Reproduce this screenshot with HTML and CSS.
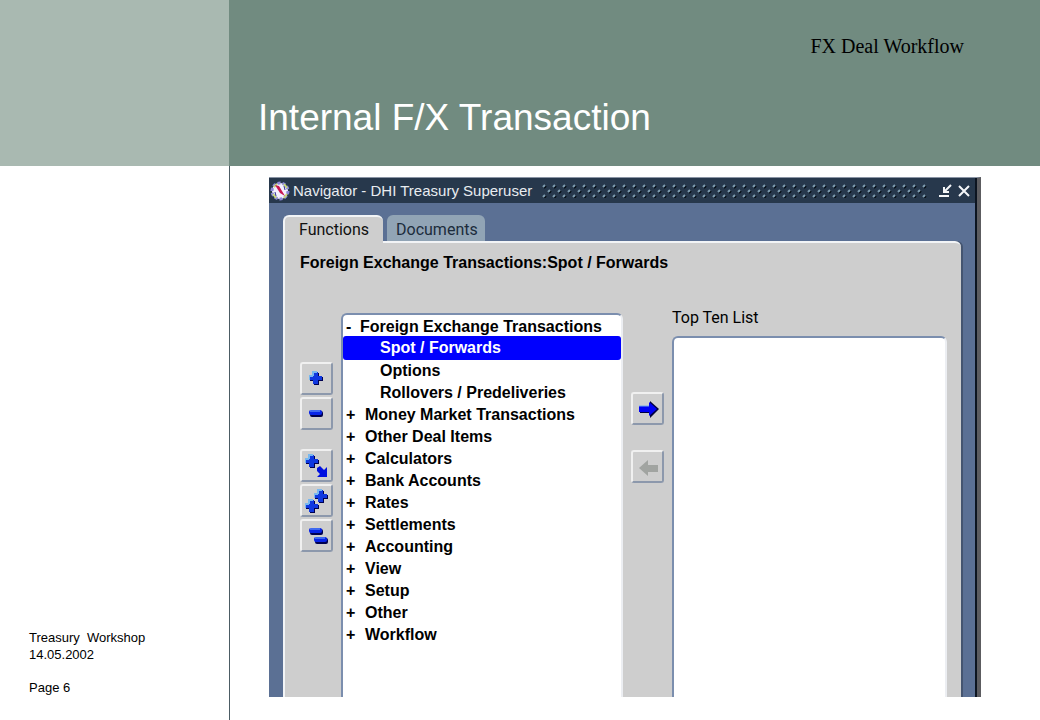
FILE: index.html
```html
<!DOCTYPE html>
<html lang="en">
<head>
    <meta charset="UTF-8">
    <meta name="viewport" content="width=device-width, initial-scale=1.0">
    <title>Internal F/X Transaction</title>
    <link rel="stylesheet" href="styles.css">
</head>
<body>
    <!-- shared icon shapes -->
    <svg class="defs" width="0" height="0" aria-hidden="true">
        <defs>
            <symbol id="plus" viewBox="0 0 14 14">
                <path d="M5 2h5v4h4v4h-4v4H5v-4H1V6h4z" fill="#000050"/>
                <path d="M4 1h5v4h4v4H9v4H4V9H0V5h4z" fill="#1038e0"/>
                <path d="M4 5V1h4M0 9V5h4" fill="none" stroke="#78b8f0" stroke-width="2"/>
            </symbol>
            <symbol id="minus" viewBox="0 0 14 7">
                <rect x="1" y="1" width="13" height="6" rx="2" fill="#000050"/>
                <rect x="0" y="0" width="13" height="5" rx="2" fill="#0824e8"/>
                <path d="M1 1h10" stroke="#78b0f8" stroke-width="1"/>
            </symbol>
            <pattern id="dots" width="10" height="10" patternUnits="userSpaceOnUse">
                <path d="M2 4l2-2M7 9l2-2" stroke="#020a12" stroke-width="2"/>
                <path d="M1 3l2-2M6 8l2-2" stroke="#7f9db0" stroke-width="2"/>
            </pattern>
        </defs>
    </svg>

    <div class="slide">
        <div class="corner"></div>
        <header class="banner">
            <p class="topic">FX Deal Workflow</p>
            <h1>Internal F/X Transaction</h1>
        </header>
        <aside class="sidebar">
            <p>Treasury&nbsp; Workshop<br>14.05.2002</p>
            <p>Page 6</p>
        </aside>
        <main class="content">
            <section class="window">
                <div class="titlebar">
                    <svg class="logo" width="20" height="20" viewBox="0 0 20 20">
                        <circle cx="10" cy="10" r="8" fill="#f4f0ff" stroke="#8c88d8" stroke-width="3" stroke-dasharray="3 2"/>
                        <path d="M4 6l3-3M14 3l3 4M3 13l3 4M14 17l3-4" stroke="#c8d878" stroke-width="2"/>
                        <path d="M5 4l4 1 6 10-5-3z" fill="#c81850"/>
                        <path d="M14 5l1 4M5 11l1 4" stroke="#303090" stroke-width="1"/>
                    </svg>
                    <h2>Navigator - DHI Treasury Superuser</h2>
                    <svg class="grip" height="14"><rect width="100%" height="14" fill="url(#dots)"/></svg>
                    <button class="win-btn" type="button" aria-label="Minimize">
                        <svg width="14" height="14" viewBox="0 0 14 14"><path d="M1 12h10M13 1L6 8M6 3v5h5" fill="none" stroke="#f4f6f8" stroke-width="2"/></svg>
                    </button>
                    <button class="win-btn" type="button" aria-label="Close">
                        <svg width="14" height="14" viewBox="0 0 14 14"><path d="M2 2l10 10M12 2L2 12" stroke="#f4f6f8" stroke-width="2"/></svg>
                    </button>
                </div>
                <div class="window-body">
                    <div class="tabs">
                        <button class="tab active" type="button">Functions</button>
                        <button class="tab" type="button">Documents</button>
                    </div>
                    <div class="panel">
                        <h3>Foreign Exchange Transactions:Spot / Forwards</h3>
                        <div class="columns">
                            <div class="tools">
                                <div class="tool-group">
                                    <button class="tool" type="button" aria-label="Expand">
                                        <svg width="27" height="27"><use href="#plus" x="6" y="6" width="14" height="14"/></svg>
                                    </button>
                                    <button class="tool" type="button" aria-label="Collapse">
                                        <svg width="27" height="27"><use href="#minus" x="6" y="10" width="14" height="7"/></svg>
                                    </button>
                                </div>
                                <div class="tool-group">
                                    <button class="tool" type="button" aria-label="Expand branch">
                                        <svg width="27" height="27">
                                            <use href="#plus" x="2" y="2" width="14" height="14"/>
                                            <path d="M14 16l3-2 4 4 3-3v10H14l3-3-3-3z" fill="#0010e0"/>
                                        </svg>
                                    </button>
                                    <button class="tool" type="button" aria-label="Expand all">
                                        <svg width="27" height="27">
                                            <use href="#plus" x="11" y="2" width="14" height="14"/>
                                            <use href="#plus" x="2" y="12" width="14" height="14"/>
                                        </svg>
                                    </button>
                                    <button class="tool" type="button" aria-label="Collapse all">
                                        <svg width="27" height="27">
                                            <use href="#minus" x="6" y="6" width="14" height="7"/>
                                            <use href="#minus" x="11" y="15" width="14" height="7"/>
                                        </svg>
                                    </button>
                                </div>
                            </div>
                            <ul class="tree">
                                <li class="root"><span class="sign">-</span>Foreign Exchange Transactions</li>
                                <li class="child selected">Spot / Forwards</li>
                                <li class="child">Options</li>
                                <li class="child">Rollovers / Predeliveries</li>
                                <li><span class="sign">+</span>Money Market Transactions</li>
                                <li><span class="sign">+</span>Other Deal Items</li>
                                <li><span class="sign">+</span>Calculators</li>
                                <li><span class="sign">+</span>Bank Accounts</li>
                                <li><span class="sign">+</span>Rates</li>
                                <li><span class="sign">+</span>Settlements</li>
                                <li><span class="sign">+</span>Accounting</li>
                                <li><span class="sign">+</span>View</li>
                                <li><span class="sign">+</span>Setup</li>
                                <li><span class="sign">+</span>Other</li>
                                <li><span class="sign">+</span>Workflow</li>
                            </ul>
                            <div class="movers">
                                <button class="tool" type="button" aria-label="Add to list">
                                    <svg width="27" height="27">
                                        <path d="M6 11h10V6l9 8-9 9v-5H6z" fill="#000040"/>
                                        <path d="M5 11h10V7l8 7-8 7v-4H5z" fill="#0000f4"/>
                                        <path d="M5 11h10" stroke="#70a8f0" stroke-width="1"/>
                                    </svg>
                                </button>
                                <button class="tool" type="button" aria-label="Remove from list" disabled>
                                    <svg width="27" height="27"><path d="M5 15l9-8v5h10v7H14v4z" fill="#a1a4a1"/></svg>
                                </button>
                            </div>
                            <div class="top-ten">
                                <label for="topten">Top Ten List</label>
                                <select id="topten" size="10"></select>
                            </div>
                        </div>
                    </div>
                </div>
            </section>
        </main>
    </div>
</body>
</html>
```
FILE: styles.css
```css
* {
    box-sizing: border-box;
}
body {
    margin: 0;
    background: #fff;
    color: #000;
    font-family: "Liberation Sans", Arial, sans-serif;
}
h1, h2, h3, p, ul {
    margin: 0;
    padding: 0;
}
button {
    font: inherit;
    padding: 0;
    border: none;
}
svg {
    display: block;
    flex: none;
}
.defs {
    position: absolute;
}
.slide {
    display: grid;
    grid-template-columns: 229px 1fr;
    grid-template-rows: 166px 1fr;
    min-height: 100vh;
}
.corner {
    background: #a9b9b1;
}
.banner {
    display: flex;
    flex-direction: column;
    justify-content: space-between;
    background: #718b80;
    padding: 32px 76px 26px 29px;
}
.topic {
    align-self: flex-end;
    font-family: "Liberation Serif", "Times New Roman", serif;
    font-size: 20px;
    line-height: 28px;
}
.banner h1 {
    color: #fff;
    font-size: 37px;
    font-weight: normal;
    line-height: 44px;
}
.sidebar {
    display: flex;
    flex-direction: column;
    justify-content: flex-end;
    gap: 16px;
    padding: 0 0 24px 29px;
    font-size: 13px;
    line-height: 17px;
}
.content {
    display: flex;
    border-left: 1px solid #4c5c64;
    padding: 11px 59px 23px 39px;
}
.window {
    flex: 1;
    display: flex;
    flex-direction: column;
    background: #5b7094;
    border-top: 1px solid #8a94a4;
    border-right: 4px solid #5c5c60;
    box-shadow: inset -2px 0 #0c1420;
}
.titlebar {
    display: flex;
    align-items: center;
    height: 25px;
    margin-right: 2px;
    padding: 0 2px 0 1px;
    background: #27384c;
}
.titlebar h2 {
    margin: 0 10px 0 3px;
    color: #e8ecf0;
    font-size: 15px;
    font-weight: normal;
}
.grip {
    flex: 1;
    width: 0;
    margin-right: 8px;
}
.win-btn {
    background: none;
    margin-left: 1px;
    padding: 0 2px;
}
.window-body {
    flex: 1;
    display: flex;
    flex-direction: column;
    padding: 12px 16px 0 14px;
}
.tabs {
    display: flex;
    gap: 4px;
}
.tab {
    height: 26px;
    padding: 0 7px 0 9px;
    border-radius: 6px 6px 0 0;
    background: #91a4b5;
    color: #1c2c3c;
    font-family: Roboto, sans-serif;
    font-size: 16px;
    line-height: 30px;
}
.tab.active {
    position: relative;
    height: 28px;
    margin-bottom: -2px;
    padding: 0 14px;
    border: 2px solid #f2f4f6;
    border-width: 2px 0 0 2px;
    background: #cecece;
    color: #111;
    line-height: 26px;
}
.panel {
    flex: 1;
    display: flex;
    flex-direction: column;
    padding: 10px 14px 0 15px;
    border: 2px solid #f2f4f6;
    border-width: 2px 0 0 2px;
    border-radius: 0 6px 0 0;
    background: #cecece;
    box-shadow: 2px 0 #455570;
}
.panel h3 {
    font-size: 16px;
    line-height: 20px;
}
.columns {
    flex: 1;
    display: grid;
    grid-template-columns: 33px 282fr 33px 275fr;
    column-gap: 8px;
    padding-top: 34px;
}
.tools {
    padding-top: 55px;
}
.tool-group {
    display: grid;
    gap: 2px;
    margin-bottom: 19px;
}
.tool {
    display: flex;
    align-items: center;
    justify-content: center;
    width: 33px;
    height: 33px;
    border: 2px solid #f0f0f0;
    border-right-color: #8c98ac;
    border-bottom-color: #8c98ac;
    border-radius: 3px;
    background: #cecece;
}
.movers {
    display: grid;
    align-content: start;
    gap: 25px;
    padding-top: 85px;
}
.tree {
    margin-top: 6px;
    padding-top: 1px;
    border: 2px solid #7b8eae;
    border-right-color: #eceef2;
    border-bottom: none;
    border-radius: 6px 6px 0 0;
    background: #fff;
    list-style: none;
    font-size: 16px;
    font-weight: bold;
    line-height: 22px;
}
.tree li {
    display: flex;
    padding-left: 3px;
}
.sign {
    width: 19px;
}
.root .sign {
    width: 14px;
}
.tree .child {
    padding-left: 37px;
}
.tree .selected {
    margin-top: -2px;
    border-radius: 3px;
    background: #0000fe;
    color: #fff;
    line-height: 24px;
}
.top-ten {
    display: flex;
    flex-direction: column;
    gap: 8px;
}
.top-ten label {
    font-family: Roboto, sans-serif;
    font-size: 16px;
    line-height: 21px;
}
.top-ten select {
    flex: 1;
    width: 100%;
    border: 2px solid #7b8eae;
    border-right-color: #eceef2;
    border-bottom: none;
    border-radius: 6px 6px 0 0;
    background: #fff;
}
```
